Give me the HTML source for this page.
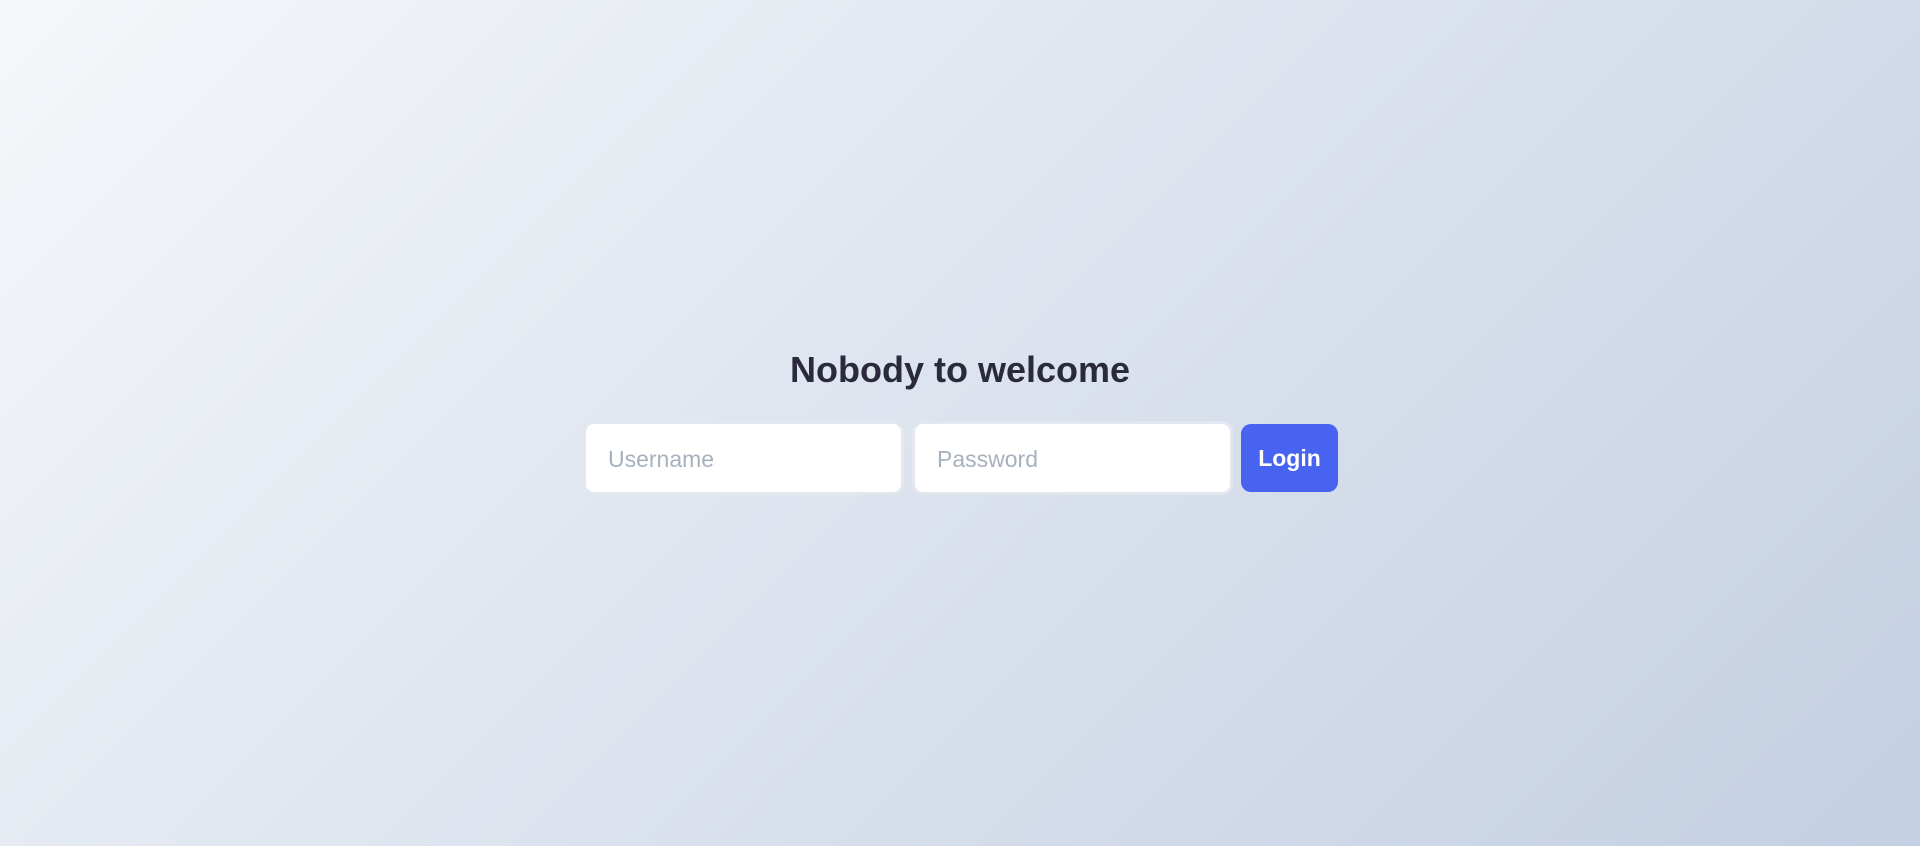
<!DOCTYPE html>
<html><head><meta charset="utf-8"><style>
html,body{margin:0;width:1920px;height:846px;overflow:hidden}
body{background:linear-gradient(135deg,#f5f7fa 0%,#c3cfe2 100%);font-family:"Liberation Sans",sans-serif}
h1{position:absolute;left:0;width:1920px;top:346px;margin:0;text-align:center;font-size:36px;font-weight:bold;color:#2a2a3c;line-height:48px;letter-spacing:0px}
.in{position:absolute;top:421px;height:68px;width:315px;background:#fff;border:3px solid #e3e8f0;border-radius:11px;box-sizing:content-box}
.in span{position:absolute;left:22px;top:22px;font-size:23px;color:#a6b1bd}
.btn{position:absolute;left:1241px;top:424px;width:97px;height:68px;background:#4763ef;border-radius:10px;color:#fff;font-weight:bold;font-size:23px;text-align:center;line-height:68px}
</style></head><body>
<h1>Nobody to welcome</h1>
<div class="in" style="left:583px"><span>Username</span></div>
<div class="in" style="left:912px"><span>Password</span></div>
<div class="btn">Login</div>
</body></html>
